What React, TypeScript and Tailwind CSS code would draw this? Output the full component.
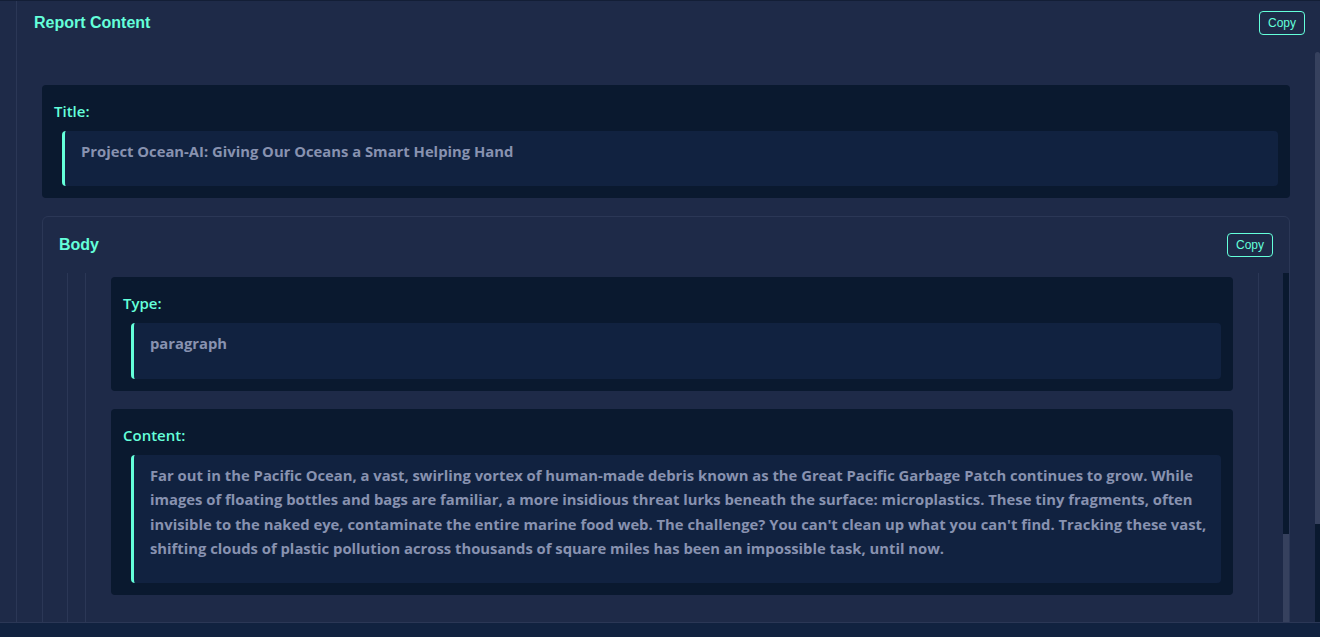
const body =
  "Far out in the Pacific Ocean, a vast, swirling vortex of human-made debris known as the Great Pacific Garbage Patch continues to grow. While images of floating bottles and bags are familiar, a more insidious threat lurks beneath the surface: microplastics. These tiny fragments, often invisible to the naked eye, contaminate the entire marine food web. The challenge? You can't clean up what you can't find. Tracking these vast, shifting clouds of plastic pollution across thousands of square miles has been an impossible task, until now.";

function CopyButton() {
  return (
    <button className="rounded border border-[#64ffda] px-2 py-[3px] font-['Liberation_Sans',Arial,sans-serif] text-xs leading-[16px] text-[#64ffda]">
      Copy
    </button>
  );
}

function Field({ label, children }: { label: string; children: React.ReactNode }) {
  return (
    <div className="rounded bg-[#0a192f] px-3 pt-[14px] pb-3">
      <div className="mb-2 text-[15px] font-semibold leading-6 text-[#64ffda]">{label}</div>
      <div className="ml-2 rounded border-l-[3px] border-[#64ffda] bg-[#112240] pt-2 pr-2 pb-[23px] pl-4 text-[14.8px] font-bold leading-[24.4px] text-[#8892b0]">
        {children}
      </div>
    </div>
  );
}

export default function App() {
  return (
    <div className="flex h-[637px] w-[1320px] flex-col overflow-hidden bg-[#1e2a48] font-['Open_Sans',sans-serif]">
      <div className="h-px bg-[#131e36]" />
      <div className="flex min-h-0 flex-1">
        <div className="w-[17px] border-r border-[#2b3756]" />
        <div className="flex min-w-0 flex-1 flex-col">
          <div className="flex h-[45px] items-start justify-between pt-[10px] pr-[10px] pl-[17px]">
            <h2 className="font-['Liberation_Sans',Arial,sans-serif] text-base font-bold text-[#64ffda]">
              Report Content
            </h2>
            <CopyButton />
          </div>
          <div className="flex flex-col gap-[18px] px-[25px] pt-[50px]">
            <Field label="Title:">Project Ocean-AI: Giving Our Oceans a Smart Helping Hand</Field>
            <div className="flex h-[500px] flex-col rounded-md border border-[#2b3756]">
              <div className="flex items-center justify-between px-4 pt-4 pb-4">
                <h3 className="font-['Liberation_Sans',Arial,sans-serif] text-base font-bold text-[#64ffda]">Body</h3>
                <CopyButton />
              </div>
              <div className="flex min-h-0 flex-1">
                <div className="flex flex-1 pr-6 pl-6">
                  <div className="flex-1 border-l border-[#2b3756] pl-[17px]">
                    <div className="flex h-full flex-col gap-[18px] border-x border-[#2b3756] px-[25px] pt-1">
                      <Field label="Type:">paragraph</Field>
                      <Field label="Content:">{body}</Field>
                    </div>
                  </div>
                </div>
                <div className="flex w-[6px] flex-col">
                  <div className="h-[261px] bg-[#0a192f]" />
                  <div className="flex-1 bg-[#36415e]" />
                </div>
              </div>
            </div>
          </div>
        </div>
        <div className="flex w-[5px] flex-col">
          <div className="h-[51px]" />
          <div className="h-[472px] rounded-t bg-[#36415e]" />
          <div className="flex-1 bg-[#0a192f]" />
        </div>
      </div>
      <div className="h-[15px] border-t border-[#2b3756] bg-[#112240]" />
    </div>
  );
}
